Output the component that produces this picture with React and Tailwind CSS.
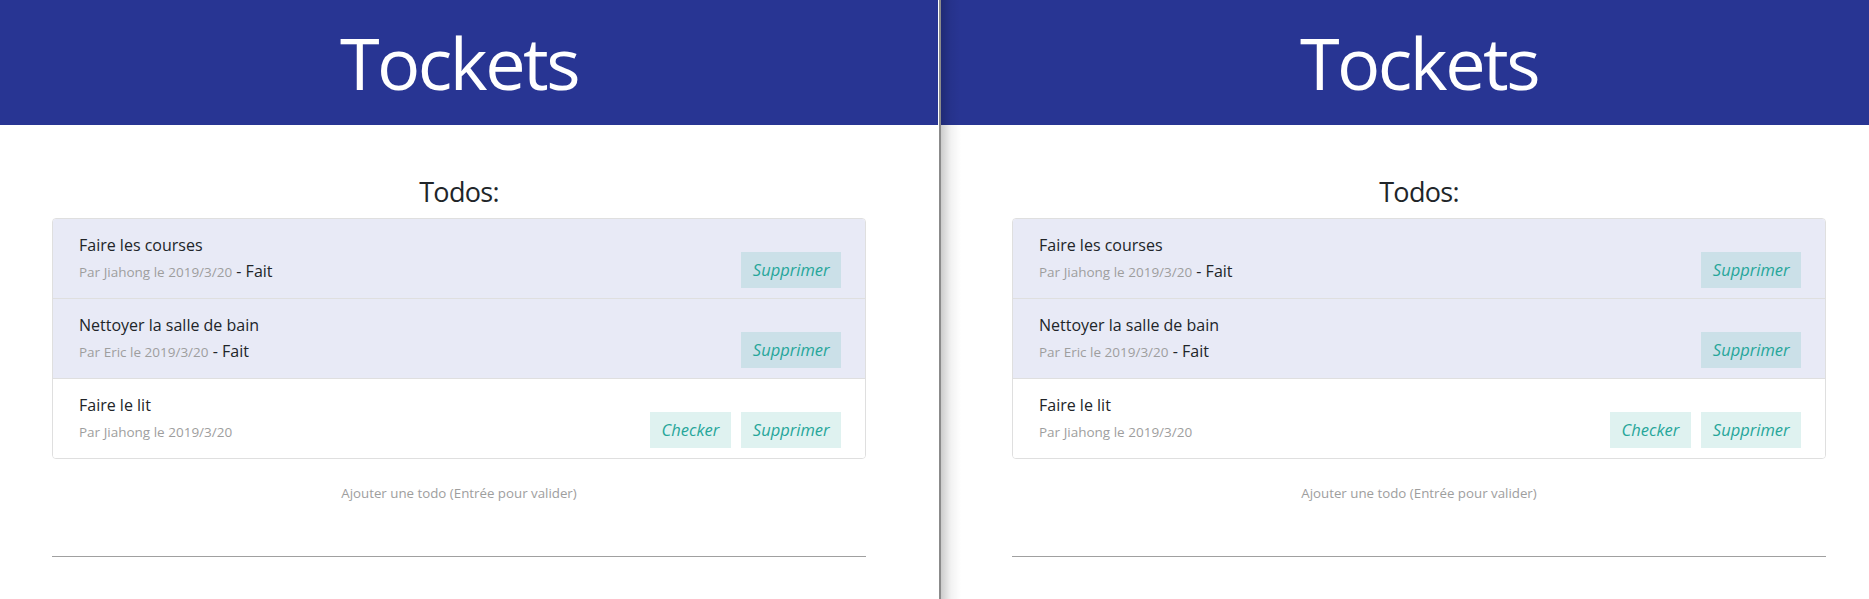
import React from "react";

const todos = [
	{ id: 1, title: "Faire les courses", author: "Jiahong", date: "2019/3/20", done: true },
	{ id: 2, title: "Nettoyer la salle de bain", author: "Eric", date: "2019/3/20", done: true },
	{ id: 3, title: "Faire le lit", author: "Jiahong", date: "2019/3/20", done: false },
];

const TodoItem = ({ todo, first }) => {
	return (
		<li
			className={
				"flex items-end justify-between pl-[26px] pr-[24px] pb-[10px] " +
				(todo.done ? "bg-[#e8eaf6] " : "bg-white ") +
				(first ? "h-[79px]" : "h-[80px] border-t border-[#dfdfdf]")
			}
		>
			<div className="self-start pt-[15px]">
				<p className="text-[16px] leading-[22px] text-[#212529]">{todo.title}</p>
				<p className="mt-[4px] text-[16px] leading-[22px] text-[#212529]">
					<span className="text-[13.5px] text-[#9e9e9e]">
						Par {todo.author} le {todo.date}
					</span>
					{todo.done && <span> - Fait</span>}
				</p>
			</div>
			<div className="flex gap-[10px]">
				{!todo.done && (
					<button className="h-[36px] px-[12px] text-[16.5px] italic text-[#26a69a] bg-[#26a69a]/15">
						Checker
					</button>
				)}
				<button className="h-[36px] px-[11.5px] text-[16.5px] italic text-[#26a69a] bg-[#26a69a]/15">
					Supprimer
				</button>
			</div>
		</li>
	);
};

const Page = ({ shifted }) => {
	const inner = shifted ? "ml-[19px] w-[918px] shrink-0" : "w-[918px] shrink-0";
	return (
		<div className="flex flex-col">
			<header className="flex h-[125px] bg-[#283593]">
				<div className={inner}>
					<h1 className="pt-[26px] text-center text-[72px] leading-[72px] tracking-[-2.5px] text-white">
						Tockets
					</h1>
				</div>
			</header>
			<main className="flex">
				<div className={inner}>
					<div className="mx-auto w-[814px]">
						<h2 className="mt-[50px] mb-[9px] h-[34px] text-center text-[27px] leading-[34px] tracking-[-0.7px] text-[#212529]">
							Todos:
						</h2>
						<ul className="overflow-hidden rounded-[4px] border border-[#dfdfdf]">
							{todos.map((todo, i) => (
								<TodoItem key={todo.id} todo={todo} first={i === 0} />
							))}
						</ul>
						<div className="mt-[24px] border-b border-[#a0a0a0] pb-[53px]">
							<input
								type="text"
								placeholder="Ajouter une todo (Entrée pour valider)"
								className="block h-[20px] w-full bg-transparent text-center text-[13.3px] text-[#212529] outline-none placeholder:text-[#9e9e9e]"
							/>
						</div>
					</div>
				</div>
			</main>
		</div>
	);
};

export default function App() {
	return (
		<div className="flex h-[599px] w-[1869px] overflow-hidden bg-white font-['Open_Sans',sans-serif]">
			<div className="w-[938px] shrink-0 overflow-hidden">
				<Page />
			</div>
			<div className="w-px shrink-0 bg-white" />
			<div className="w-[2px] shrink-0 bg-[#8b8b8b]" />
			<div className="relative flex-1 overflow-hidden">
				<Page shifted />
				{/* window edge shadow */}
				<div className="pointer-events-none absolute inset-y-0 left-0 w-[20px] bg-gradient-to-r from-black/20 via-black/5 to-transparent" />
			</div>
		</div>
	);
}
